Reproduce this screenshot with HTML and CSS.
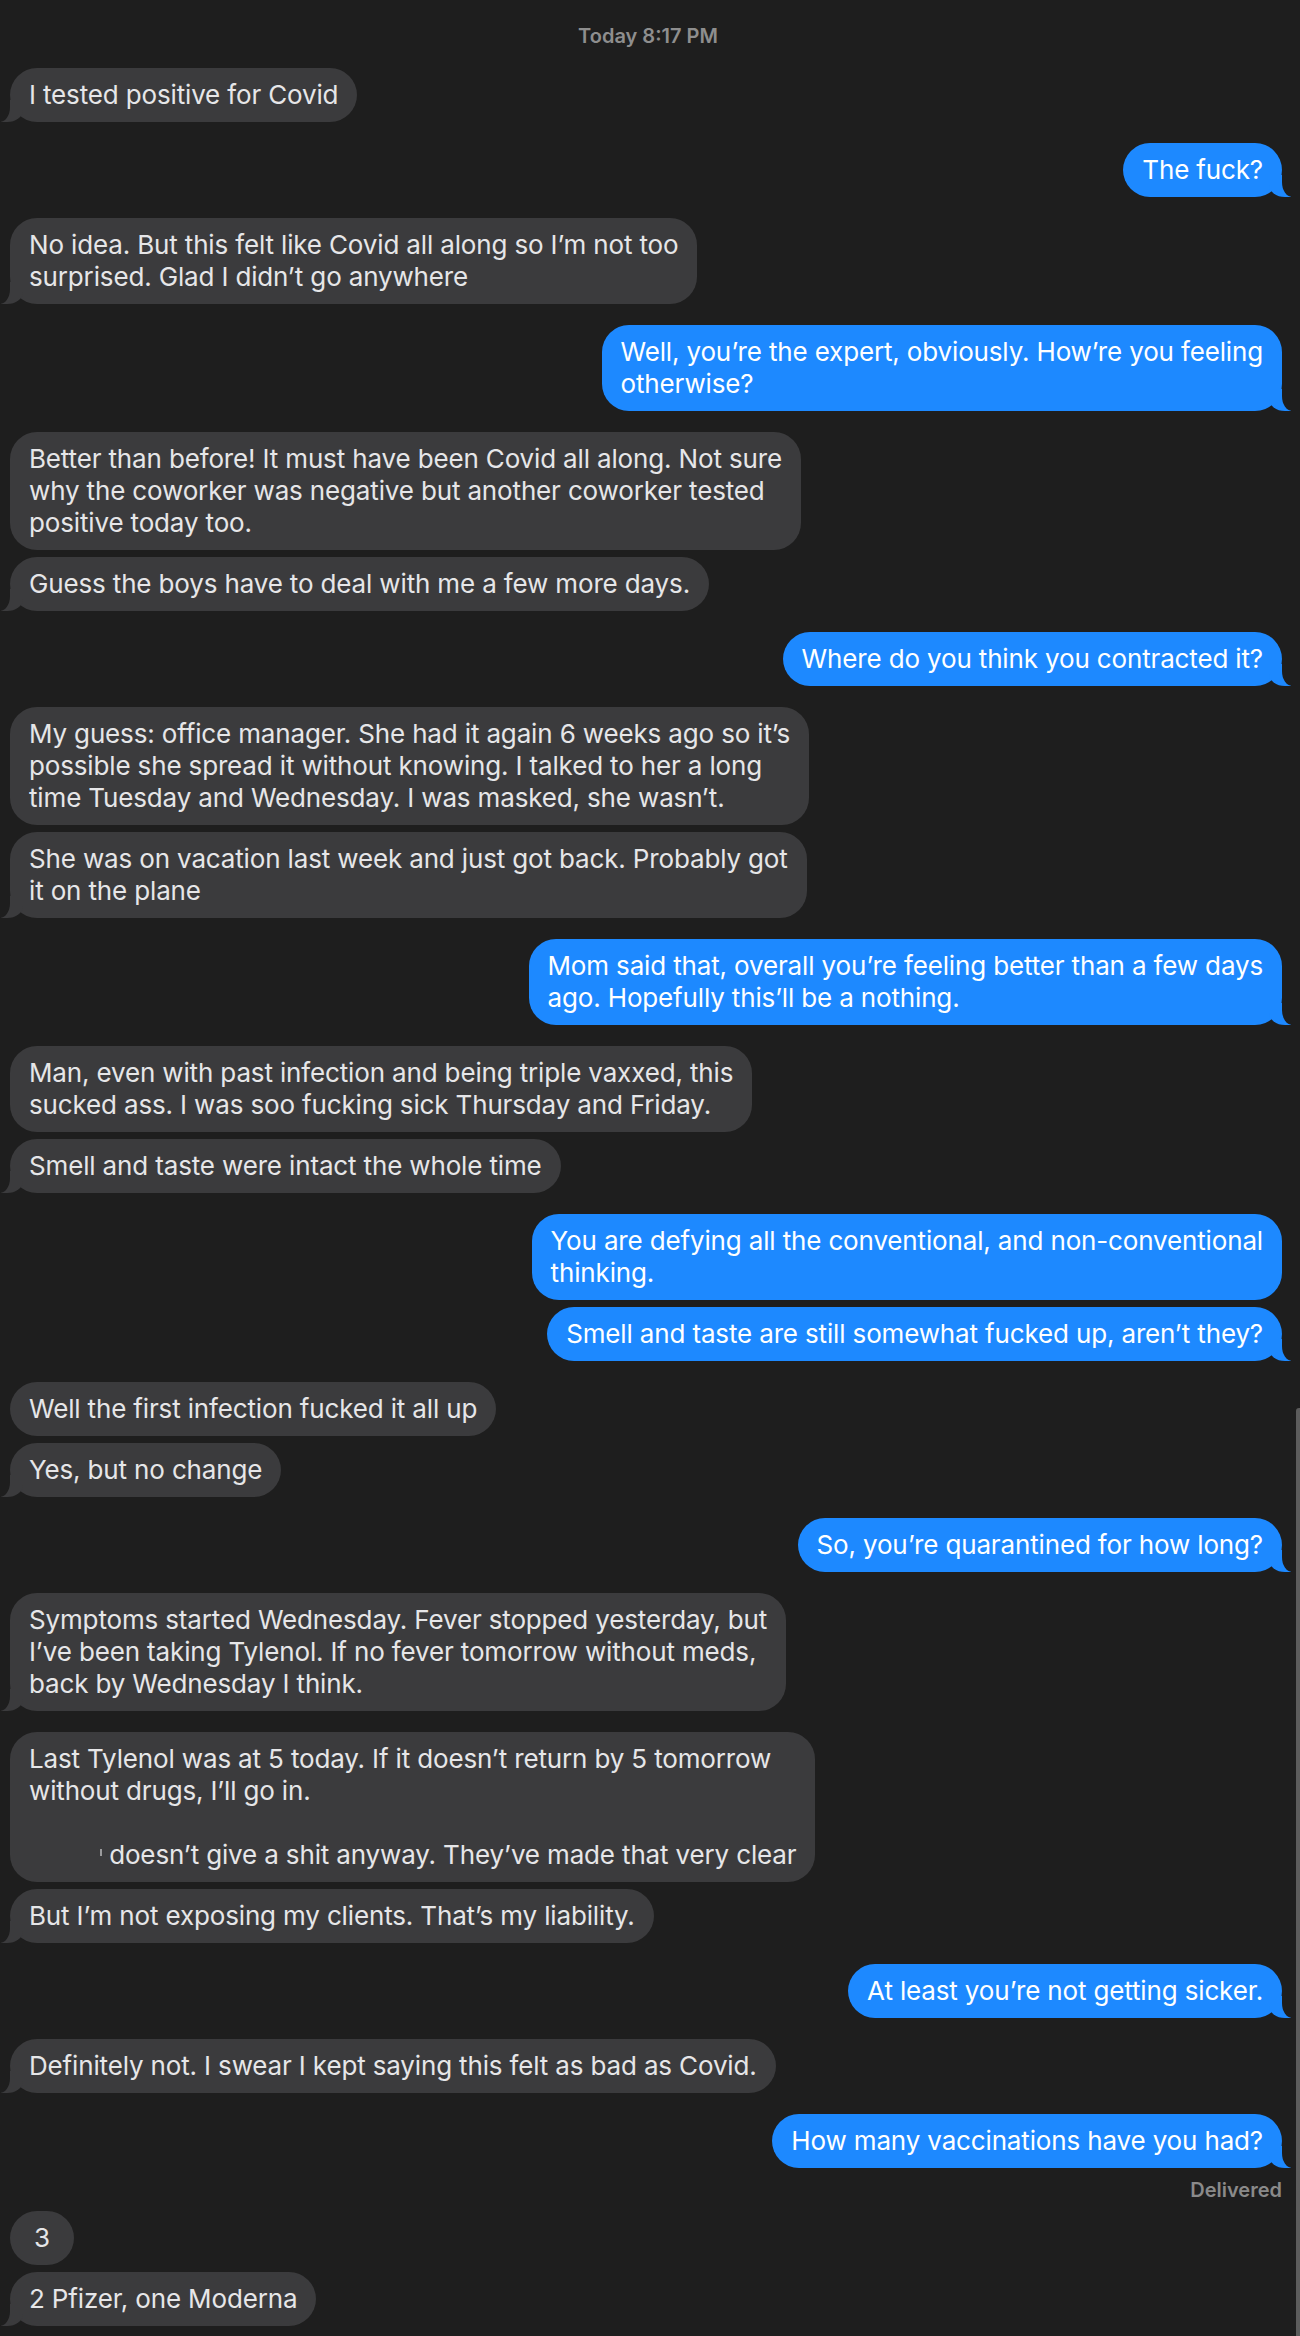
FILE: index.html
```html
<!DOCTYPE html>
<html lang="en">
<head>
    <meta charset="UTF-8">
    <meta name="viewport" content="width=device-width, initial-scale=1.0">
    <title>Messages</title>
    <link rel="stylesheet" href="styles.css">
</head>
<body>
    <div class="thread">
        <div class="stamp">Today 8:17 PM</div>

        <div class="group in">
            <div class="bubble tail">I tested positive for Covid</div>
        </div>

        <div class="group out">
            <div class="bubble tail">The fuck?</div>
        </div>

        <div class="group in">
            <div class="bubble tail">No idea. But this felt like Covid all along so I’m not too<br>surprised. Glad I didn’t go anywhere</div>
        </div>

        <div class="group out">
            <div class="bubble tail">Well, you’re the expert, obviously. How’re you feeling<br>otherwise?</div>
        </div>

        <div class="group in">
            <div class="bubble">Better than before! It must have been Covid all along. Not sure<br>why the coworker was negative but another coworker tested<br>positive today too.</div>
            <div class="bubble tail">Guess the boys have to deal with me a few more days.</div>
        </div>

        <div class="group out">
            <div class="bubble tail">Where do you think you contracted it?</div>
        </div>

        <div class="group in">
            <div class="bubble">My guess: office manager. She had it again 6 weeks ago so it’s<br>possible she spread it without knowing. I talked to her a long<br>time Tuesday and Wednesday. I was masked, she wasn’t.</div>
            <div class="bubble tail">She was on vacation last week and just got back. Probably got<br>it on the plane</div>
        </div>

        <div class="group out">
            <div class="bubble tail">Mom said that, overall you’re feeling better than a few days<br>ago. Hopefully this’ll be a nothing.</div>
        </div>

        <div class="group in">
            <div class="bubble">Man, even with past infection and being triple vaxxed, this<br>sucked ass. I was soo fucking sick Thursday and Friday.</div>
            <div class="bubble tail">Smell and taste were intact the whole time</div>
        </div>

        <div class="group out">
            <div class="bubble">You are defying all the conventional, and non-conventional<br>thinking.</div>
            <div class="bubble tail">Smell and taste are still somewhat fucked up, aren’t they?</div>
        </div>

        <div class="group in">
            <div class="bubble">Well the first infection fucked it all up</div>
            <div class="bubble tail">Yes, but no change</div>
        </div>

        <div class="group out">
            <div class="bubble tail">So, you’re quarantined for how long?</div>
        </div>

        <div class="group in">
            <div class="bubble tail">Symptoms started Wednesday. Fever stopped yesterday, but<br>I’ve been taking Tylenol. If no fever tomorrow without meds,<br>back by Wednesday I think.</div>
        </div>

        <div class="group in">
            <div class="bubble">Last Tylenol was at 5 today. If it doesn’t return by 5 tomorrow<br>without drugs, I’ll go in.<br><br><span class="redacted"></span> doesn’t give a shit anyway. They’ve made that very clear</div>
            <div class="bubble tail">But I’m not exposing my clients. That’s my liability.</div>
        </div>

        <div class="group out">
            <div class="bubble tail">At least you’re not getting sicker.</div>
        </div>

        <div class="group in">
            <div class="bubble tail">Definitely not. I swear I kept saying this felt as bad as Covid.</div>
        </div>

        <div class="group out last">
            <div class="bubble tail">How many vaccinations have you had?</div>
            <div class="status">Delivered</div>
        </div>

        <div class="group in">
            <div class="bubble num">3</div>
            <div class="bubble tail">2 Pfizer, one Moderna</div>
        </div>
    </div>

    <div class="scrollbar"></div>
</body>
</html>
```

FILE: styles.css
```css
html, body {
    margin: 0;
    height: 100%;
    overflow: hidden;
}
body {
    position: relative;
    background: #1e1e1e;
    font-family: Inter, "Noto Sans", sans-serif;
    -webkit-font-smoothing: antialiased;
}
.thread {
    display: flex;
    flex-direction: column;
    gap: 21px;
    padding: 25px 18px 0 10px;
}
.stamp {
    text-align: center;
    font-size: 20px;
    line-height: 22px;
    font-weight: 600;
    color: #8e8e8e;
    padding-left: 4px;
}
.group {
    display: flex;
    flex-direction: column;
    gap: 7px;
}
.group.in {
    align-items: flex-start;
}
.group.out {
    align-items: flex-end;
}
.group.last {
    margin-bottom: -10px;
}
.bubble {
    position: relative;
    padding: 11px 19px;
    font-size: 26px;
    line-height: 32px;
    letter-spacing: -0.15px;
    border-radius: 27px;
    white-space: nowrap;
}
.in .bubble {
    background: #3b3b3d;
    color: #e6e6e8;
}
.out .bubble {
    background: #1d89ff;
    color: #fff;
}
.bubble.num {
    padding: 11px 24px;
}

/* bubble tails */
.bubble.tail::before,
.bubble.tail::after {
    content: "";
    position: absolute;
    bottom: 0;
    height: 22px;
}
.in .bubble.tail::before {
    left: -9px;
    width: 0;
    border-left: 22px solid #3b3b3d;
    border-bottom-right-radius: 16px 12px;
}
.in .bubble.tail::after {
    left: -10px;
    width: 10px;
    background: #1e1e1e;
    border-bottom-right-radius: 10px 15px;
}
.out .bubble.tail::before {
    right: -9px;
    width: 0;
    border-right: 22px solid #1d89ff;
    border-bottom-left-radius: 16px 12px;
}
.out .bubble.tail::after {
    right: -10px;
    width: 10px;
    background: #1e1e1e;
    border-bottom-left-radius: 10px 15px;
}

.redacted {
    display: inline-block;
    width: 2px;
    height: 7px;
    margin-left: 71px;
    background: #9a9a9c;
    vertical-align: 8px;
}
.status {
    margin-top: 5px;
    font-size: 20px;
    line-height: 20px;
    font-weight: 600;
    color: #8a8a8a;
}
.scrollbar {
    position: absolute;
    top: 1408px;
    right: 0;
    bottom: 0;
    width: 4px;
    border-radius: 3px 0 0 0;
    background: #5c5c5c;
}
```
